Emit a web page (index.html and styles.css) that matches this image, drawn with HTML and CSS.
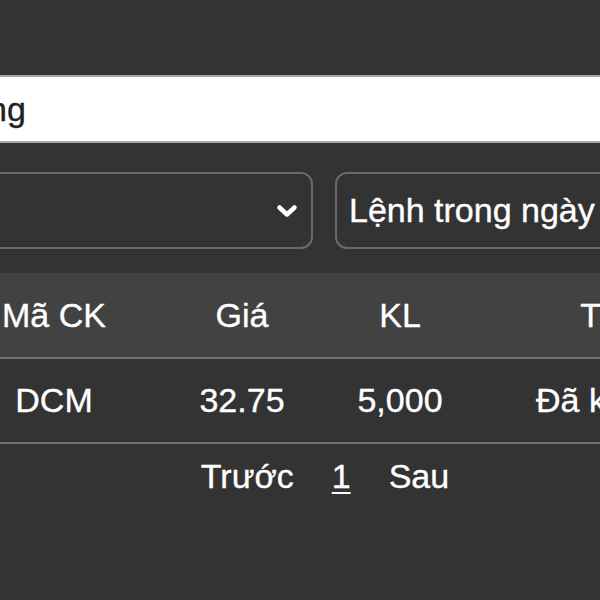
FILE: index.html
```html
<!DOCTYPE html>
<html lang="vi">
<head>
    <meta charset="UTF-8">
    <meta name="viewport" content="width=device-width, initial-scale=1.0">
    <title>Sổ lệnh</title>
    <link rel="stylesheet" href="styles.css">
</head>
<body>
    <div id="order-page">
        <div id="search-box">
            <span class="search-text">ng</span>
        </div>

        <div id="filter-row">
            <div class="filter-select">
                <span class="select-label"></span>
                <svg class="chevron" width="22" height="14" viewBox="0 0 22 14">
                    <polyline points="3.5,3.5 11,10.5 18.5,3.5" fill="none" stroke="#fff" stroke-width="4.5" stroke-linecap="round" stroke-linejoin="round"/>
                </svg>
            </div>
            <div class="filter-select">
                <span class="select-label">Lệnh trong ngày</span>
            </div>
        </div>

        <div id="order-table">
            <div class="table-row table-head">
                <div class="cell">Mã CK</div>
                <div class="cell">Giá</div>
                <div class="cell">KL</div>
                <div class="cell">TT</div>
            </div>
            <div class="table-row">
                <div class="cell">DCM</div>
                <div class="cell">32.75</div>
                <div class="cell">5,000</div>
                <div class="cell">Đã khớp</div>
            </div>
        </div>

        <div id="pagination">
            <a class="page-link">Trước</a>
            <a class="page-link current">1</a>
            <a class="page-link">Sau</a>
        </div>
    </div>
</body>
</html>
```

FILE: styles.css
```css
* {
    box-sizing: border-box;
    margin: 0;
    padding: 0;
}

body {
    font-family: 'Liberation Sans', Arial, sans-serif;
    background-color: #333333;
    color: #ffffff;
    height: 100vh;
    overflow: hidden;
}

#order-page {
    width: 778px;
    margin-left: -40px;
    padding-top: 75px;
    font-size: 34px;
    -webkit-text-stroke: 0.35px currentColor;
}

#search-box {
    background: #ffffff;
    border-top: 2px solid #a9a9a9;
    border-bottom: 2px solid #a9a9a9;
    height: 68px;
    display: flex;
    align-items: center;
    padding-left: 28px;
    color: #222222;
}

#filter-row {
    margin-top: 29px;
    display: grid;
    grid-template-columns: 353px 1fr;
    gap: 22px;
}

.filter-select {
    height: 77px;
    border: 2px solid #6a6a6a;
    border-radius: 12px;
    display: flex;
    align-items: center;
    justify-content: space-between;
    padding: 0 13px 0 12px;
}

.chevron {
    display: block;
}

#order-table {
    margin-top: 24px;
}

.table-row {
    display: grid;
    grid-template-columns: 188px 188px 128px 274px;
    height: 85px;
    border-bottom: 2px solid #707070;
    align-items: center;
    text-align: center;
}

.table-head {
    height: 86px;
    background: #424242;
}

#pagination {
    display: flex;
    justify-content: center;
    gap: 38px;
    padding: 12px 48px 0 0;
    line-height: 40px;
}

.page-link {
    color: #ffffff;
    cursor: pointer;
}

.page-link.current {
    text-decoration: underline;
    text-decoration-thickness: 2px;
    text-underline-offset: 4px;
}
```
